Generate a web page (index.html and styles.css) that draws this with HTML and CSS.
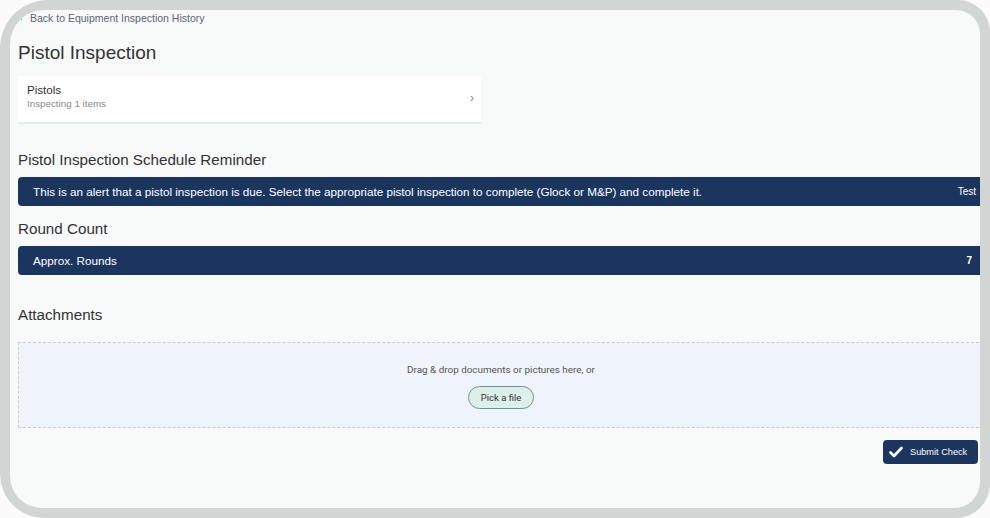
FILE: index.html
```html
<!DOCTYPE html>
<html lang="en">
<head>
  <meta charset="UTF-8">
  <meta name="viewport" content="width=device-width, initial-scale=1.0">
  <title>Pistol Inspection</title>
  <link rel="stylesheet" href="styles.css">
</head>
<body>
  <div class="frame">
    <div class="screen">
      <a href="#" class="back-link">
        <svg class="back-icon" width="6" height="6" viewBox="0 0 6 6"><path d="M4 1 L2 3 L4 5" fill="none" stroke="#8a90a0" stroke-width="1"/></svg>
        Back to Equipment Inspection History
      </a>

      <h1 class="page-title">Pistol Inspection</h1>

      <div class="item-card">
        <div>
          <div class="item-name">Pistols</div>
          <div class="item-sub">Inspecting 1 items</div>
        </div>
        <span class="chevron">›</span>
      </div>

      <h2 class="section-title reminder-title">Pistol Inspection Schedule Reminder</h2>
      <div class="info-bar">
        <span>This is an alert that a pistol inspection is due. Select the appropriate pistol inspection to complete (Glock or M&amp;P) and complete it.</span>
        <span class="bar-value">Test</span>
      </div>

      <h2 class="section-title">Round Count</h2>
      <div class="info-bar">
        <span>Approx. Rounds</span>
        <span class="bar-value count">7</span>
      </div>

      <h2 class="section-title attach-title">Attachments</h2>
      <div class="dropzone">
        <p>Drag &amp; drop documents or pictures here, or</p>
        <button class="pick-btn">Pick a file</button>
      </div>

      <div class="actions">
        <button class="submit-btn">
          <svg width="14" height="12" viewBox="0 0 14 12"><path d="M1.5 6.5 L5 10 L12.5 2" fill="none" stroke="#fff" stroke-width="2.6" stroke-linecap="round" stroke-linejoin="round"/></svg>
          Submit Check
        </button>
      </div>
    </div>
  </div>
</body>
</html>
```

FILE: styles.css
```css
body {
  margin: 0;
  background: #fbfbfb;
  font-family: "Liberation Sans", Arial, sans-serif;
  color: #333;
}

.frame {
  width: 990px;
  height: 518px;
  box-sizing: border-box;
  padding: 10px 10px 10px 10px;
  background: #d1d6d4;
  border-radius: 48px 32px 34px 44px;
}

.screen {
  height: 100%;
  background: #f8f9f9;
  border-radius: 34px 24px 26px 32px;
  overflow: hidden;
  padding: 1px 0 0 8px;
  box-sizing: border-box;
}

.back-link {
  display: flex;
  align-items: center;
  gap: 6px;
  height: 14px;
  font-size: 10.5px;
  color: #5d6579;
  text-decoration: none;
}

.page-title {
  margin: 16px 0 0;
  font-size: 19px;
  line-height: 24px;
  font-weight: normal;
  color: #333;
}

.item-card {
  display: flex;
  justify-content: space-between;
  align-items: center;
  width: 463px;
  box-sizing: border-box;
  margin-top: 11px;
  padding: 7px 7px 11px 9px;
  background: #fff;
  box-shadow: 0 2px 1px rgba(0, 0, 0, 0.06);
}

.item-name {
  font-size: 11.6px;
  line-height: 14px;
  color: #333;
}

.item-sub {
  font-size: 9.8px;
  line-height: 14px;
  color: #8a8a8a;
}

.chevron {
  font-size: 12px;
  color: #888;
  margin-top: 2px;
}

.section-title {
  margin: 14px 0 8px;
  font-size: 15.2px;
  line-height: 18px;
  font-weight: normal;
  color: #333;
}

.reminder-title {
  margin-top: 29px;
}

.attach-title {
  margin: 31px 0 18px;
}

.info-bar {
  display: flex;
  justify-content: space-between;
  align-items: center;
  height: 29px;
  padding: 0 6px 0 15px;
  margin-right: -2px;
  background: #1b355f;
  border-radius: 4px 0 0 4px;
  color: #fff;
  font-size: 11.7px;
}

.bar-value {
  font-size: 10px;
}

.count {
  font-weight: bold;
  padding-right: 4px;
}

.dropzone {
  height: 86px;
  box-sizing: border-box;
  margin-right: -4px;
  padding-top: 21px;
  background: #eff3fa;
  border: 1px dashed #c8ccd2;
  text-align: center;
}

.dropzone p {
  margin: 0;
  font-family: Roboto, sans-serif;
  font-size: 9.9px;
  line-height: 12px;
  color: #555;
}

.pick-btn {
  margin-top: 10px;
  height: 23px;
  padding: 0 12px;
  border: 1px solid #6a978c;
  border-radius: 12px;
  background: #dcefea;
  font-family: Roboto, sans-serif;
  font-size: 9.5px;
  color: #333;
}

.actions {
  display: flex;
  justify-content: flex-end;
  margin-top: 12px;
  padding-right: 2px;
}

.submit-btn {
  display: flex;
  align-items: center;
  gap: 7px;
  width: 95px;
  height: 24px;
  padding: 0 6px;
  border: none;
  border-radius: 4px;
  background: #1b355f;
  color: #fff;
  font-family: "Liberation Sans", Arial, sans-serif;
  font-size: 9.2px;
}
```
